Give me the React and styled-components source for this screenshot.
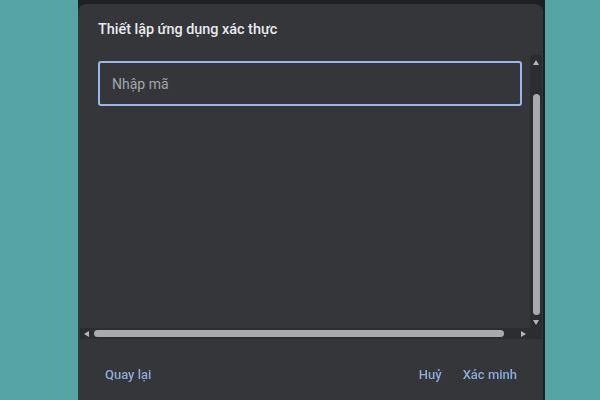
import React from "react";
import styled, { createGlobalStyle } from "styled-components";

const GlobalStyle = createGlobalStyle`
  html, body {
    margin: 0;
    padding: 0;
    width: 600px;
    height: 400px;
    overflow: hidden;
    background: #57a4a4;
    font-family: "Roboto", "Liberation Sans", sans-serif;
  }
`;

const Page = styled.div`
  display: flex;
  width: 600px;
  height: 400px;
  padding-left: 78px;
  box-sizing: border-box;
  background: #57a4a4;
`;

const Frame = styled.div`
  width: 467px;
  height: 400px;
  padding-top: 4px;
  padding-right: 2px;
  box-sizing: border-box;
  background: #1f2023;
  display: flex;
`;

const Dialog = styled.div`
  flex: 1;
  display: flex;
  flex-direction: column;
  background: #35363a;
  border-radius: 8px 8px 0 0;
`;

const Title = styled.h2`
  margin: 0;
  height: 51px;
  padding: 17px 0 0 20px;
  box-sizing: border-box;
  font-size: 14.4px;
  font-weight: 500;
  color: #e8eaed;
`;

const ScrollArea = styled.div`
  display: grid;
  grid-template-columns: 1fr 12px;
  grid-template-rows: 1fr 11px;
  height: 284px;
  margin: 0 1px 0 2px;
`;

const Content = styled.div`
  padding: 6px 8px 0 18px;
`;

const CodeInput = styled.input`
  width: 424px;
  height: 45px;
  box-sizing: border-box;
  border: 2px solid #9ab6ee;
  border-radius: 3px;
  background: #35363a;
  padding: 0 12px;
  font-family: "Roboto", "Liberation Sans", sans-serif;
  font-size: 14px;
  color: #e8eaed;
  outline: none;
  caret-color: #e8eaed;

  &::placeholder {
    color: #a2a5aa;
  }
`;

const VBar = styled.div`
  display: flex;
  flex-direction: column;
  align-items: center;
  background: #2c2d30;
  padding: 5px 0 3px;
`;

const HBar = styled.div`
  display: flex;
  align-items: center;
  background: #2c2d30;
  padding: 0 4px;
`;

const Corner = styled.div`
  background: #2c2d30;
`;

const Arrow = styled.div`
  width: 0;
  height: 0;
  border: 3.5px solid transparent;
  ${(p) => p.dir === "up" && "border-bottom: 5px solid #b5b6b8; border-top-width: 0;"}
  ${(p) => p.dir === "down" && "border-top: 5px solid #b5b6b8; border-bottom-width: 0;"}
  ${(p) => p.dir === "left" && "border-right: 5px solid #b5b6b8; border-left-width: 0;"}
  ${(p) => p.dir === "right" && "border-left: 5px solid #b5b6b8; border-right-width: 0;"}
`;

const VThumb = styled.div`
  width: 7px;
  height: 221px;
  margin: 29px 0 4px 1px;
  border-radius: 4px;
  background: #a9aaab;
`;

const HThumb = styled.div`
  height: 7px;
  width: 410px;
  margin: 0 auto 0 5px;
  border-radius: 4px;
  background: #a9aaab;
`;

const Spacer = styled.div`
  flex: 1;
`;

const Footer = styled.div`
  flex: 1;
  display: flex;
  align-items: center;
  padding: 10px 17px 0 18px;
`;

const TextButton = styled.button`
  border: none;
  background: none;
  padding: 4px 9px;
  margin-left: ${(p) => p.gap || 0}px;
  font-family: "Roboto", "Liberation Sans", sans-serif;
  font-size: 13px;
  font-weight: 500;
  color: #8cabdc;
  cursor: pointer;
`;

export default function App() {
  return (
    <>
      <GlobalStyle />
      <Page>
        <Frame>
          <Dialog>
            <Title>Thiết lập ứng dụng xác thực</Title>
            <ScrollArea>
              <Content>
                <CodeInput placeholder="Nhập mã" autoFocus />
              </Content>
              <VBar>
                <Arrow dir="up" />
                <VThumb />
                <Spacer />
                <Arrow dir="down" />
              </VBar>
              <HBar>
                <Arrow dir="left" />
                <HThumb />
                <Arrow dir="right" />
              </HBar>
              <Corner />
            </ScrollArea>
            <Footer>
              <TextButton>Quay lại</TextButton>
              <Spacer />
              <TextButton>Huỷ</TextButton>
              <TextButton gap={3}>Xác minh</TextButton>
            </Footer>
          </Dialog>
        </Frame>
      </Page>
    </>
  );
}
